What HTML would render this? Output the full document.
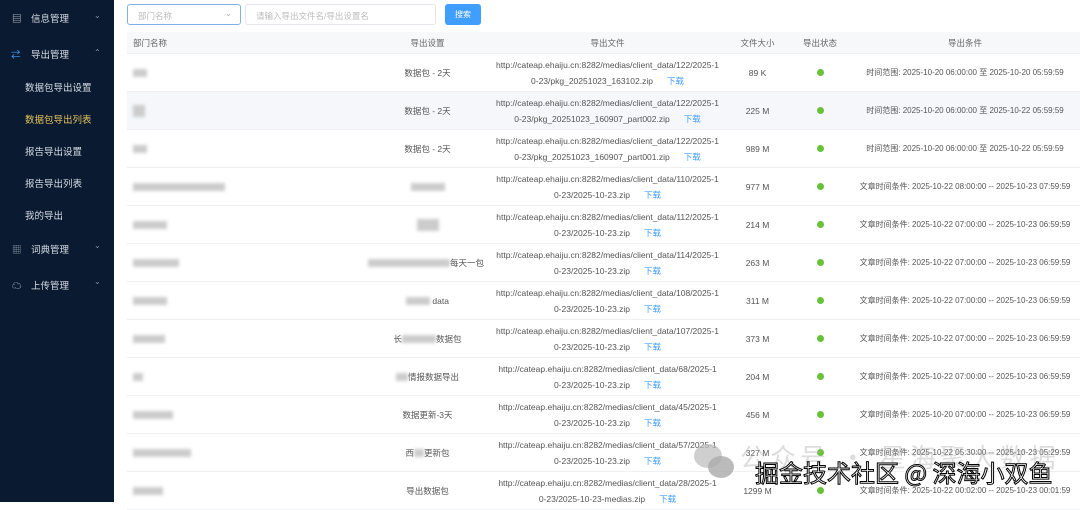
<!DOCTYPE html>
<html><head><meta charset="utf-8"><style>
*{margin:0;padding:0;box-sizing:border-box}
body{width:1080px;height:502px;overflow:hidden;background:#fff;font-family:"Liberation Sans","Noto Sans CJK SC",sans-serif;font-size:8.5px;color:#555;position:relative}
.side{position:absolute;left:0;top:0;width:114px;height:502px;background:#0a1a30;color:#d8dde6;font-size:9.5px}
.side div{position:absolute;white-space:nowrap}
.arr{color:#8a94a3;font-size:8px}
.main{position:absolute;left:114px;top:0;right:0;height:502px}
.sel{position:absolute;left:13px;top:4px;width:114px;height:21px;border:1px solid #7fb0e8;border-radius:3px;color:#bbb;padding:5px 10px;font-size:8.5px}
.inp{position:absolute;left:131px;top:4px;width:191px;height:21px;border:1px solid #e3e6ea;border-radius:3px;color:#bbb;padding:5px 10px;font-size:8.5px}
.btn{position:absolute;left:331px;top:4px;width:36px;height:21px;background:#409eff;border-radius:3px;color:#fff;text-align:center;line-height:21px;font-size:8px}
.row{position:absolute;left:13px;width:953px;height:38px;display:flex;align-items:center;border-bottom:1px solid #eef0f3}
.row>div{text-align:center;line-height:16px;white-space:nowrap}
.c1{width:238px;text-align:left!important;padding-left:6px}
.c2{width:125px}.c3{width:235px}.c4{width:65px}.c5{width:60px}.c6{width:230px;font-size:8px}
.hd{top:32px;height:22px;background:#f7f8fa;color:#666}
.hd .c6{font-size:8.5px}
.dl{color:#409eff;margin-left:14px}
.dot{display:inline-block;width:7px;height:7px;border-radius:50%;background:#67c23a}
.bl{display:inline-block;height:8px;background:#ccc;filter:blur(1.5px);vertical-align:middle}
.alt{background:#f5f7fa}
.wm{position:absolute;left:755px;top:454px;font-size:24px;color:#fff;-webkit-text-stroke:1px #000;font-family:"Noto Sans CJK SC",sans-serif;white-space:nowrap}
.wm2{position:absolute;left:740px;top:438px;font-size:26px;color:rgba(170,170,170,.4);font-family:"Noto Sans CJK SC",sans-serif;white-space:nowrap;letter-spacing:4px}
</style></head><body>
<div class="side">
<div style="left:12px;top:11px">▤</div><div style="left:31px;top:11px">信息管理</div><div class="arr" style="left:94px;top:11px">⌄</div>
<div style="left:11px;top:47px;color:#409eff">⇄</div><div style="left:31px;top:47px">导出管理</div><div class="arr" style="left:94px;top:48px">⌃</div>
<div style="left:25px;top:80px">数据包导出设置</div>
<div style="left:25px;top:112px;color:#e6c35c">数据包导出列表</div>
<div style="left:25px;top:144px">报告导出设置</div>
<div style="left:25px;top:176px">报告导出列表</div>
<div style="left:25px;top:208px">我的导出</div>
<div style="left:12px;top:242px;color:#8a94a3">▦</div><div style="left:31px;top:242px">词典管理</div><div class="arr" style="left:94px;top:241px">⌄</div>
<div style="left:12px;top:278px">☁</div><div style="left:31px;top:278px">上传管理</div><div class="arr" style="left:94px;top:277px">⌄</div>
</div>
<div class="main">
<div class="sel">部门名称<span style="position:absolute;right:8px;top:3px;color:#aaa">⌄</span></div>
<div class="inp">请输入导出文件名/导出设置名</div>
<div class="btn">搜索</div>
<div class="row hd"><div class="c1">部门名称</div><div class="c2">导出设置</div><div class="c3">导出文件</div><div class="c4">文件大小</div><div class="c5">导出状态</div><div class="c6">导出条件</div></div>

<div class="row" style="top:54px"><div class="c1"><span class="bl" style="width:14px"></span></div><div class="c2">数据包 - 2天</div><div class="c3">http://cateap.ehaiju.cn:8282/medias/client_data/122/2025-1<br>0-23/pkg_20251023_163102.zip<span class="dl">下载</span></div><div class="c4">89 K</div><div class="c5"><span class="dot"></span></div><div class="c6">时间范围: 2025-10-20 06:00:00 至 2025-10-20 05:59:59</div></div>
<div class="row alt" style="top:92px"><div class="c1"><span class="bl" style="width:12px;height:12px"></span></div><div class="c2">数据包 - 2天</div><div class="c3">http://cateap.ehaiju.cn:8282/medias/client_data/122/2025-1<br>0-23/pkg_20251023_160907_part002.zip<span class="dl">下载</span></div><div class="c4">225 M</div><div class="c5"><span class="dot"></span></div><div class="c6">时间范围: 2025-10-20 06:00:00 至 2025-10-22 05:59:59</div></div>
<div class="row" style="top:130px"><div class="c1"><span class="bl" style="width:14px"></span></div><div class="c2">数据包 - 2天</div><div class="c3">http://cateap.ehaiju.cn:8282/medias/client_data/122/2025-1<br>0-23/pkg_20251023_160907_part001.zip<span class="dl">下载</span></div><div class="c4">989 M</div><div class="c5"><span class="dot"></span></div><div class="c6">时间范围: 2025-10-20 06:00:00 至 2025-10-22 05:59:59</div></div>
<div class="row" style="top:168px"><div class="c1"><span class="bl" style="width:92px"></span></div><div class="c2"><span class="bl" style="width:34px"></span></div><div class="c3">http://cateap.ehaiju.cn:8282/medias/client_data/110/2025-1<br>0-23/2025-10-23.zip<span class="dl">下载</span></div><div class="c4">977 M</div><div class="c5"><span class="dot"></span></div><div class="c6">文章时间条件: 2025-10-22 08:00:00 -- 2025-10-23 07:59:59</div></div>
<div class="row" style="top:206px"><div class="c1"><span class="bl" style="width:34px"></span></div><div class="c2"><span class="bl" style="width:22px;height:12px"></span></div><div class="c3">http://cateap.ehaiju.cn:8282/medias/client_data/112/2025-1<br>0-23/2025-10-23.zip<span class="dl">下载</span></div><div class="c4">214 M</div><div class="c5"><span class="dot"></span></div><div class="c6">文章时间条件: 2025-10-22 07:00:00 -- 2025-10-23 06:59:59</div></div>
<div class="row" style="top:244px"><div class="c1"><span class="bl" style="width:46px"></span></div><div class="c2" style="text-align:right;padding-right:6px"><span class="bl" style="width:82px"></span>每天一包</div><div class="c3">http://cateap.ehaiju.cn:8282/medias/client_data/114/2025-1<br>0-23/2025-10-23.zip<span class="dl">下载</span></div><div class="c4">263 M</div><div class="c5"><span class="dot"></span></div><div class="c6">文章时间条件: 2025-10-22 07:00:00 -- 2025-10-23 06:59:59</div></div>
<div class="row" style="top:282px"><div class="c1"><span class="bl" style="width:34px"></span></div><div class="c2"><span class="bl" style="width:24px"></span> data</div><div class="c3">http://cateap.ehaiju.cn:8282/medias/client_data/108/2025-1<br>0-23/2025-10-23.zip<span class="dl">下载</span></div><div class="c4">311 M</div><div class="c5"><span class="dot"></span></div><div class="c6">文章时间条件: 2025-10-22 07:00:00 -- 2025-10-23 06:59:59</div></div>
<div class="row" style="top:320px"><div class="c1"><span class="bl" style="width:32px"></span></div><div class="c2">长<span class="bl" style="width:34px"></span>数据包</div><div class="c3">http://cateap.ehaiju.cn:8282/medias/client_data/107/2025-1<br>0-23/2025-10-23.zip<span class="dl">下载</span></div><div class="c4">373 M</div><div class="c5"><span class="dot"></span></div><div class="c6">文章时间条件: 2025-10-22 07:00:00 -- 2025-10-23 06:59:59</div></div>
<div class="row" style="top:358px"><div class="c1"><span class="bl" style="width:10px"></span></div><div class="c2"><span class="bl" style="width:12px"></span>情报数据导出</div><div class="c3">http://cateap.ehaiju.cn:8282/medias/client_data/68/2025-1<br>0-23/2025-10-23.zip<span class="dl">下载</span></div><div class="c4">204 M</div><div class="c5"><span class="dot"></span></div><div class="c6">文章时间条件: 2025-10-22 07:00:00 -- 2025-10-23 06:59:59</div></div>
<div class="row" style="top:396px"><div class="c1"><span class="bl" style="width:40px"></span></div><div class="c2">数据更新-3天</div><div class="c3">http://cateap.ehaiju.cn:8282/medias/client_data/45/2025-1<br>0-23/2025-10-23.zip<span class="dl">下载</span></div><div class="c4">456 M</div><div class="c5"><span class="dot"></span></div><div class="c6">文章时间条件: 2025-10-20 07:00:00 -- 2025-10-23 06:59:59</div></div>
<div class="row" style="top:434px"><div class="c1"><span class="bl" style="width:58px"></span></div><div class="c2">西<span class="bl" style="width:10px"></span>更新包</div><div class="c3">http://cateap.ehaiju.cn:8282/medias/client_data/57/2025-1<br>0-23/2025-10-23.zip<span class="dl">下载</span></div><div class="c4">327 M</div><div class="c5"><span class="dot"></span></div><div class="c6">文章时间条件: 2025-10-22 05:30:00 -- 2025-10-23 05:29:59</div></div>
<div class="row" style="top:472px"><div class="c1"><span class="bl" style="width:30px"></span></div><div class="c2">导出数据包</div><div class="c3">http://cateap.ehaiju.cn:8282/medias/client_data/28/2025-1<br>0-23/2025-10-23-medias.zip<span class="dl">下载</span></div><div class="c4">1299 M</div><div class="c5"><span class="dot"></span></div><div class="c6">文章时间条件: 2025-10-22 00:02:00 -- 2025-10-23 00:01:59</div></div>
</div>
<div class="wm2">公众号 · 星海聚大数据</div>
<svg style="position:absolute;left:692px;top:442px" width="44" height="40"><ellipse cx="16" cy="14" rx="14" ry="12" fill="#bbb" opacity=".7"/><ellipse cx="29" cy="25" rx="13" ry="11" fill="#aaa" opacity=".8"/></svg>
<div class="wm">掘金技术社区 @ 深海小双鱼</div>
</body></html>
